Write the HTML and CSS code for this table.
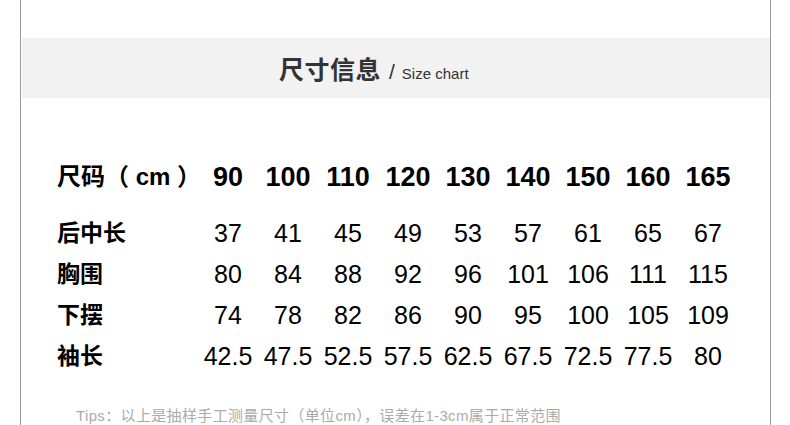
FILE: index.html
```html
<!DOCTYPE html>
<html lang="zh-CN">
<head>
<meta charset="utf-8">
<title>尺寸信息</title>
<link rel="stylesheet" href="styles.css">
</head>
<body>
<div class="frame">
  <div class="band">
    <h1 class="title"><span class="title-cn">尺寸信息</span><span class="slash">/</span><span class="title-en">Size chart</span></h1>
  </div>
  <div class="chart">
    <div class="row head">
      <div class="label">尺码（ cm ）</div>
      <div class="cell">90</div><div class="cell">100</div><div class="cell">110</div><div class="cell">120</div><div class="cell">130</div><div class="cell">140</div><div class="cell">150</div><div class="cell">160</div><div class="cell">165</div>
    </div>
    <div class="body">
      <div class="row">
        <div class="label">后中长</div>
        <div class="cell">37</div><div class="cell">41</div><div class="cell">45</div><div class="cell">49</div><div class="cell">53</div><div class="cell">57</div><div class="cell">61</div><div class="cell">65</div><div class="cell">67</div>
      </div>
      <div class="row">
        <div class="label">胸围</div>
        <div class="cell">80</div><div class="cell">84</div><div class="cell">88</div><div class="cell">92</div><div class="cell">96</div><div class="cell">101</div><div class="cell">106</div><div class="cell">111</div><div class="cell">115</div>
      </div>
      <div class="row">
        <div class="label">下摆</div>
        <div class="cell">74</div><div class="cell">78</div><div class="cell">82</div><div class="cell">86</div><div class="cell">90</div><div class="cell">95</div><div class="cell">100</div><div class="cell">105</div><div class="cell">109</div>
      </div>
      <div class="row">
        <div class="label">袖长</div>
        <div class="cell">42.5</div><div class="cell">47.5</div><div class="cell">52.5</div><div class="cell">57.5</div><div class="cell">62.5</div><div class="cell">67.5</div><div class="cell">72.5</div><div class="cell">77.5</div><div class="cell">80</div>
      </div>
    </div>
  </div>
  <p class="tips">Tips：以上是抽样手工测量尺寸（单位cm），误差在1-3cm属于正常范围</p>
</div>
</body>
</html>
```
FILE: styles.css
```css
html, body {
  margin: 0;
  padding: 0;
  background: #ffffff;
  overflow: hidden;
}

.frame {
  margin-left: 20px;
  width: 749px;
  height: 387px;
  border-left: 1px solid #999999;
  border-right: 1px solid #999999;
  padding-top: 38px;
  box-sizing: content-box;
  font-family: "Liberation Sans", "Noto Sans CJK SC", sans-serif;
  overflow: hidden;
}

.band {
  margin-left: 1px;
  height: 60px;
  background: #f2f2f2;
  display: flex;
  align-items: center;
}

.title {
  margin: 0 0 0 257px;
  display: flex;
  align-items: baseline;
  font-weight: normal;
  color: #333333;
}

.title-cn {
  font-family: "Noto Sans CJK SC", sans-serif;
  font-weight: 700;
  font-size: 25px;
  letter-spacing: 0.5px;
}

.slash {
  font-family: "Liberation Sans", sans-serif;
  font-size: 21px;
  margin-left: 8px;
  margin-right: 7px;
}

.title-en {
  font-family: "Liberation Sans", sans-serif;
  font-size: 15px;
}

.chart {
  padding-left: 36px;
  margin-top: 59px;
}

.row {
  display: grid;
  grid-template-columns: 141px repeat(9, 60px);
  height: 41px;
  align-items: center;
}

.head {
  height: 40px;
  margin-bottom: 16px;
}

.label {
  font-family: "Noto Sans CJK SC", sans-serif;
  font-weight: 700;
  font-size: 23px;
  color: #000000;
  white-space: nowrap;
  line-height: 37px;
  padding-bottom: 4px;
}

.head .label {
  font-family: "Liberation Sans", "Noto Sans CJK SC", sans-serif;
  font-size: 24px;
  line-height: 39px;
  padding-bottom: 2px;
}

.cell {
  text-align: center;
  font-size: 25px;
  line-height: 41px;
  color: #000000;
}

.head .cell {
  font-weight: 700;
  font-size: 27px;
}

.tips {
  margin: 29px 0 0 55px;
  font-family: "Liberation Sans", "Noto Sans CJK SC", sans-serif;
  font-size: 15px;
  letter-spacing: 0.35px;
  line-height: 20px;
  color: #aaaaaa;
  white-space: nowrap;
}
```
